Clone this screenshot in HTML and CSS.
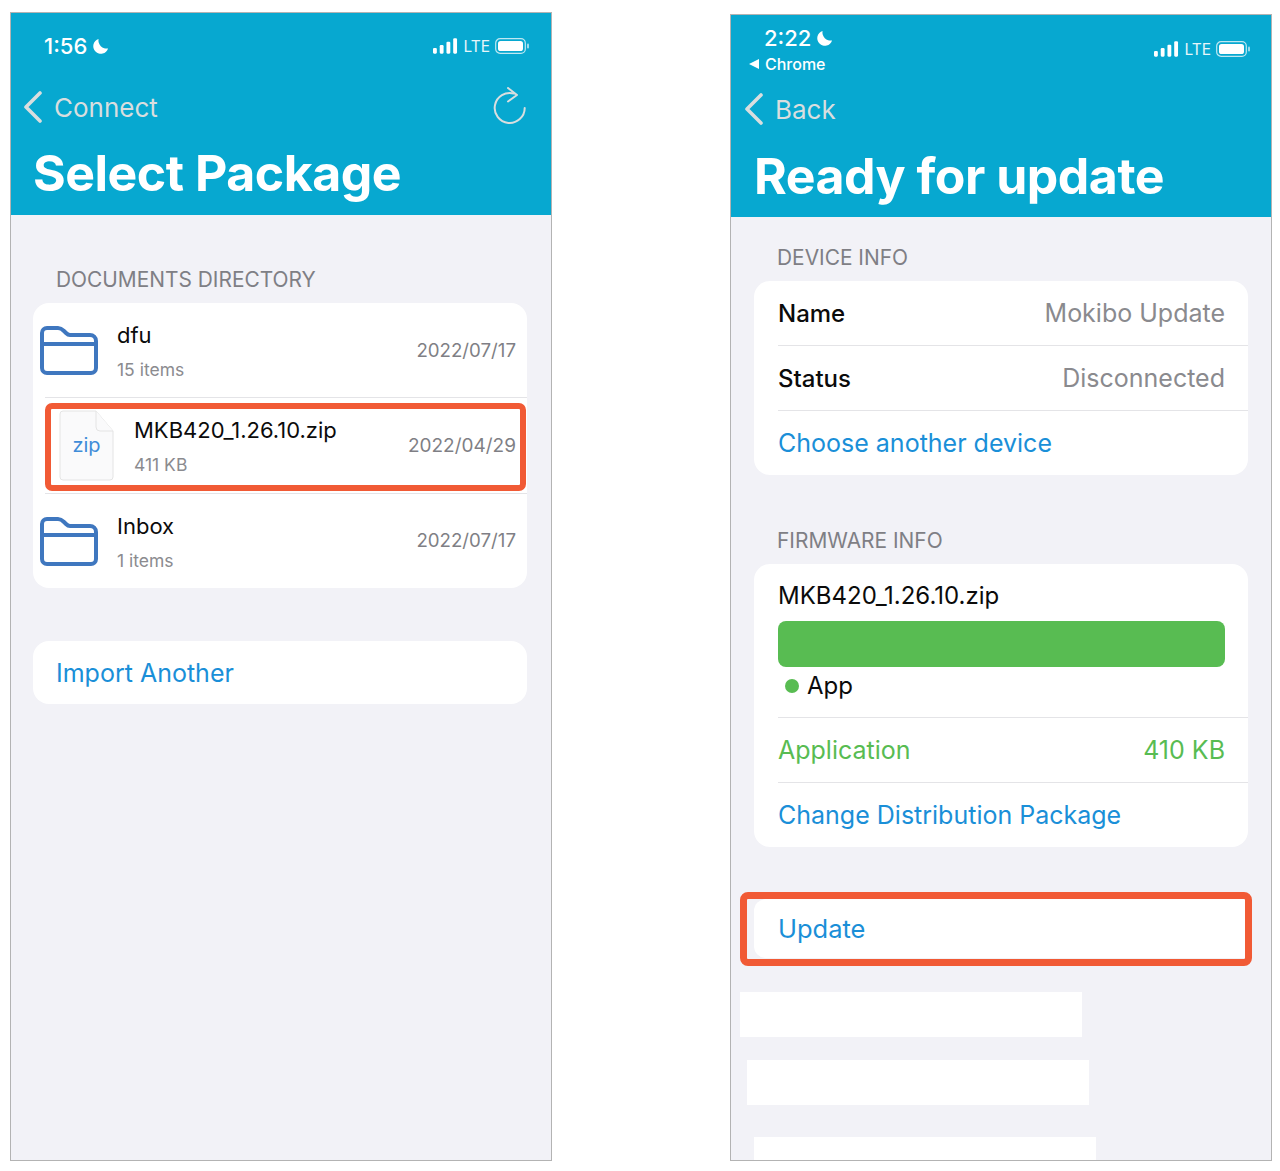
FILE: index.html
```html
<!DOCTYPE html>
<html lang="en">
<head>
<meta charset="utf-8">
<title>Select Package and Ready for update</title>
<link rel="stylesheet" href="styles.css">
</head>
<body>
<main class="page">
  <section class="phone phone-left">
    <header class="hero hero-left">
      <div class="status status-left">
        <div class="clock"><span>1:56</span><svg class="moon" viewBox="0 0 18 18"><path d="M7 1A8 8 0 1 0 17 11 8.500 8.500 0 0 1 7 1Z"/></svg></div>
        <div class="signal">
          <svg class="bars" viewBox="0 0 26 16"><rect x="0" y="10" width="4" height="6" rx="1.2"/><rect x="7" y="7" width="4" height="9" rx="1.2"/><rect x="14" y="3.5" width="4" height="12.5" rx="1.2"/><rect x="21" y="0" width="4" height="16" rx="1.2"/></svg>
          <span>LTE</span>
          <svg class="battery" viewBox="0 0 35 16"><rect x=".7" y=".7" width="29.6" height="14.6" rx="4.4" class="batt-line"/><rect x="3" y="3" width="25" height="10" rx="2.6"/><rect x="32" y="5.5" width="2" height="5" rx="1" opacity=".6"/></svg>
        </div>
      </div>
      <div class="nav nav-left">
        <svg class="chevron" viewBox="0 0 20 32"><path d="M17 2 3 16l14 14"/></svg>
        <span class="nav-label">Connect</span>
        <svg class="refresh" viewBox="0 0 34 40"><path d="M22 6.600A15 15 0 1 0 32.700 21"/><path d="M16 1l9 7-9 6.500"/></svg>
      </div>
      <h1 class="title title-left">Select Package</h1>
    </header>
    <div class="body body-left">
      <h2 class="section-label label-docs">DOCUMENTS DIRECTORY</h2>
      <div class="card files">
        <div class="file-row">
          <svg class="folder" viewBox="0 0 60 50"><path d="M3 8a5 5 0 0 1 5-5h11c3 0 4 1 6 3l2 2c1 1 2 2 4 2h20a6 6 0 0 1 6 6v27a5 5 0 0 1-5 5H8a5 5 0 0 1-5-5Z"/><path d="M3 19h54"/></svg>
          <div class="file-text"><div class="file-name">dfu</div><div class="file-meta">15 items</div></div>
          <div class="file-date">2022/07/17</div>
        </div>
        <div class="file-row file-row-zip">
          <div class="zip-doc">
            <svg class="zip-sheet" viewBox="0 0 55 71"><path d="M4 1H37L54 21V67a3 3 0 0 1-3 3H4a3 3 0 0 1-3-3V4a3 3 0 0 1 3-3Z"/><path d="M37 1V17a4 4 0 0 0 4 4H54"/></svg>
            <span class="zip-label">zip</span>
          </div>
          <div class="file-text"><div class="file-name">MKB420_1.26.10.zip</div><div class="file-meta">411 KB</div></div>
          <div class="file-date date-zip">2022/04/29</div>
          <div class="mark mark-file"></div>
        </div>
        <div class="file-row">
          <svg class="folder" viewBox="0 0 60 50"><path d="M3 8a5 5 0 0 1 5-5h11c3 0 4 1 6 3l2 2c1 1 2 2 4 2h20a6 6 0 0 1 6 6v27a5 5 0 0 1-5 5H8a5 5 0 0 1-5-5Z"/><path d="M3 19h54"/></svg>
          <div class="file-text"><div class="file-name">Inbox</div><div class="file-meta">1 items</div></div>
          <div class="file-date">2022/07/17</div>
        </div>
      </div>
      <div class="card import"><span class="link">Import Another</span></div>
    </div>
  </section>

  <section class="phone phone-right">
    <header class="hero hero-right">
      <div class="status status-right">
        <div class="clock-stack">
          <div class="clock"><span>2:22</span><svg class="moon" viewBox="0 0 18 18"><path d="M7 1A8 8 0 1 0 17 11 8.500 8.500 0 0 1 7 1Z"/></svg></div>
          <div class="return"><svg class="return-arrow" viewBox="0 0 10 10"><path d="M10 0v10L0 5Z"/></svg><span>Chrome</span></div>
        </div>
        <div class="signal signal-right">
          <svg class="bars" viewBox="0 0 26 16"><rect x="0" y="10" width="4" height="6" rx="1.2"/><rect x="7" y="7" width="4" height="9" rx="1.2"/><rect x="14" y="3.5" width="4" height="12.5" rx="1.2"/><rect x="21" y="0" width="4" height="16" rx="1.2"/></svg>
          <span>LTE</span>
          <svg class="battery" viewBox="0 0 35 16"><rect x=".7" y=".7" width="29.6" height="14.6" rx="4.4" class="batt-line"/><rect x="3" y="3" width="25" height="10" rx="2.6"/><rect x="32" y="5.5" width="2" height="5" rx="1" opacity=".6"/></svg>
        </div>
      </div>
      <div class="nav nav-right">
        <svg class="chevron" viewBox="0 0 20 32"><path d="M17 2 3 16l14 14"/></svg>
        <span class="nav-label">Back</span>
      </div>
      <h1 class="title title-right">Ready for update</h1>
    </header>
    <div class="body body-right">
      <h2 class="section-label label-device">DEVICE INFO</h2>
      <div class="card info">
        <div class="info-row info-row-short"><span class="info-key">Name</span><span class="info-value">Mokibo Update</span></div>
        <div class="info-row"><span class="info-key">Status</span><span class="info-value">Disconnected</span></div>
        <div class="info-row"><span class="link">Choose another device</span></div>
      </div>
      <h2 class="section-label label-firmware">FIRMWARE INFO</h2>
      <div class="card info firmware">
        <div class="firmware-top">
          <div class="firmware-name">MKB420_1.26.10.zip</div>
          <div class="progress"></div>
          <div class="legend"><i class="dot"></i><span>App</span></div>
        </div>
        <div class="info-row info-row-short row-green"><span>Application</span><span>410 KB</span></div>
        <div class="info-row"><span class="link">Change Distribution Package</span></div>
      </div>
      <div class="update-wrap">
        <div class="update-card"><span class="link update-link">Update</span></div>
        <div class="mark mark-update"></div>
      </div>
      <div class="blank blank-one"></div>
      <div class="blank blank-two"></div>
      <div class="blank blank-three"></div>
    </div>
  </section>
</main>
</body>
</html>
```

FILE: styles.css
```css
* { box-sizing: border-box; }
html, body { margin: 0; background: #fff; }
body { width: 1280px; height: 1171px; overflow: hidden; font-family: Inter, "Liberation Sans", sans-serif; color: #0b0b0b; }
.page { display: flex; align-items: flex-start; padding: 12px 0 0 10px; gap: 178px; }
.phone { width: 542px; flex: none; display: flex; flex-direction: column; border: 1px solid #b3b3b3; background: #f2f2f7; overflow: hidden; }
.phone-left { height: 1149px; }
.phone-right { height: 1147px; margin-top: 2px; }

.hero { height: 202px; background: #07a8d0; color: #fff; flex: none; }
.status { display: flex; justify-content: space-between; align-items: flex-start; }
.status-left { padding: 20px 21px 0 33px; height: 70px; }
.status-right { padding: 10px 20px 0 33px; height: 70px; }
.clock { display: flex; align-items: center; gap: 5px; font-size: 22px; font-weight: 500; line-height: 26px; }
.moon { width: 17px; height: 17px; flex: none; fill: #fff; }
.clock-stack { display: flex; flex-direction: column; }
.return { display: flex; align-items: center; gap: 6px; margin: 3px 0 0 -15px; font-size: 16px; font-weight: 500; line-height: 20px; }
.return-arrow { width: 10px; height: 10px; fill: #fff; }
.signal { display: flex; align-items: center; gap: 5px; height: 26px; font-size: 15.5px; color: #e6f6fa; }
.signal-right { margin-top: 11px; }
.bars { width: 25px; height: 16px; fill: #fff; }
.battery { width: 35px; height: 16px; fill: #fff; }
.batt-line { fill: none; stroke: #bfe8f2; stroke-width: 1.2; }

.nav { display: flex; align-items: center; height: 48px; color: #d9dedf; font-size: 26px; }
.nav-left { padding: 0 25px 0 12px; }
.nav-right { padding: 0 25px 0 13px; }
.chevron { width: 20px; height: 32px; flex: none; fill: none; stroke: #d9dedf; stroke-width: 3.6; stroke-linecap: round; stroke-linejoin: round; }
.nav-label { margin-left: 11px; }
.refresh { width: 34px; height: 40px; flex: none; margin-left: auto; fill: none; stroke: #d9dedf; stroke-width: 2; stroke-linecap: round; stroke-linejoin: round; }
.title { margin: 12px 0 0; font-size: 50px; line-height: 60px; font-weight: 700; letter-spacing: -.5px; color: #fff; white-space: nowrap; }
.title-left { padding-left: 22px; }
.title-right { margin-top: 13px; padding-left: 23px; }

.body { flex: 1; display: flex; flex-direction: column; }
.body-left { padding: 0 23px 0 22px; }
.body-right { padding: 0 23px; }
.section-label { margin: 0; padding-left: 23px; font-size: 20.9px; line-height: 24px; font-weight: 400; color: #7f7f85; flex: none; }
.label-docs { margin-top: 53px; margin-bottom: 11px; }
.label-device { margin-top: 29px; margin-bottom: 11px; }
.label-firmware { margin-top: 54px; margin-bottom: 11px; }
.card { background: #fff; border-radius: 16px; flex: none; }
.link { color: #1a8fd8; font-size: 25px; line-height: 32px; }

.files { height: 285px; display: flex; flex-direction: column; }
.file-row { position: relative; flex: 1; display: flex; align-items: center; padding: 0 11px 0 6px; }
.file-row-zip { border-top: 1px solid #e4e4e7; border-bottom: 1px solid #e4e4e7; margin-left: 12px; padding-left: 14px; }
.folder { width: 60px; height: 50px; flex: none; fill: none; stroke: #3f77bf; stroke-width: 4; stroke-linejoin: round; margin-right: 18px; }
.file-text { flex: 1; display: flex; flex-direction: column; gap: 10px; padding-top: 2px; }
.file-name { font-size: 22px; line-height: 28px; color: #0b0b0b; }
.file-meta { font-size: 17.5px; line-height: 22px; color: #8b8b8f; }
.file-date { font-size: 18.7px; color: #7f7f85; }
.date-zip { font-size: 19px; }
.zip-doc { position: relative; width: 55px; height: 71px; flex: none; margin-right: 20px; display: flex; align-items: center; justify-content: center; }
.zip-sheet { position: absolute; inset: 0; width: 55px; height: 71px; fill: #fafafb; stroke: #e4e4e4; stroke-width: 1; }
.zip-label { position: relative; color: #3f8cd8; font-size: 20px; }
.mark { position: absolute; border: 6px solid #f15a35; border-radius: 7px; }
.mark-file { left: 0; top: 5px; width: 481px; height: 88px; }
.import { height: 63px; margin-top: 53px; padding-left: 23px; display: flex; align-items: center; }
.body-left .card { margin-right: 1px; }

.info { padding-left: 24px; }
.info-row { height: 65px; display: flex; align-items: center; justify-content: space-between; padding-right: 23px; font-size: 25px; }
.info-row-short { height: 64px; }
.info-row + .info-row { border-top: 1px solid #e4e4e7; }
.info-key { color: #0b0b0b; font-size: 24px; font-weight: 500; }
.info-value { color: #8a8a8e; }
.firmware-top { height: 154px; padding: 17px 23px 0 0; border-bottom: 1px solid #e4e4e7; }
.firmware-name { font-size: 24px; line-height: 30px; }
.progress { height: 46px; margin-top: 10px; background: #58bc52; border-radius: 8px; }
.legend { display: flex; align-items: center; gap: 8px; margin-top: 1px; padding-left: 7px; font-size: 24px; line-height: 36px; }
.dot { width: 14px; height: 14px; border-radius: 50%; background: #58bc52; }
.row-green { color: #58bc52; }

.update-wrap { position: relative; margin-top: 52px; height: 59px; flex: none; }
.update-card { height: 59px; margin-right: -2px; padding-left: 24px; background: #fff; border-radius: 12px 0 0 12px; display: flex; align-items: center; }
.update-link { font-size: 25.5px; }
.mark-update { left: -14px; top: -7px; width: 512px; height: 74px; border-width: 7px; border-radius: 8px; }
.blank { width: 342px; background: #fff; flex: none; }
.blank-one { height: 45px; margin: 34px 0 0 -14px; }
.blank-two { height: 45px; margin: 23px 0 0 -7px; }
.blank-three { height: 23px; margin: 32px 0 0 0; }
```
